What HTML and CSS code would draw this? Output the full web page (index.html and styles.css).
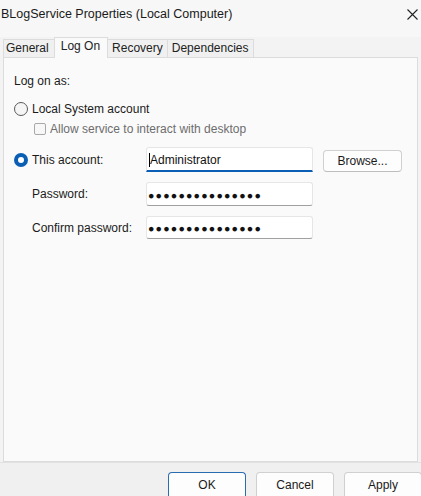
FILE: index.html
```html
<!DOCTYPE html>
<html>
<head>
<meta charset="utf-8">
<link rel="stylesheet" href="styles.css">
</head>
<body>
<div class="window">
  <div class="titlebar">
    <span class="title">BLogService Properties (Local Computer)</span>
    <svg class="close" width="11" height="11" viewBox="0 0 11 11"><path d="M0.5 0.5L10.5 10.5M10.5 0.5L0.5 10.5" stroke="#222" stroke-width="1.1" fill="none"/></svg>
  </div>
  <div class="tabs">
    <div class="tab">General</div>
    <div class="tab active">Log On</div>
    <div class="tab">Recovery</div>
    <div class="tab">Dependencies</div>
  </div>
  <div class="panel">
    <div class="heading">Log on as:</div>
    <div class="option">
      <span class="radio"></span>
      <span>Local System account</span>
    </div>
    <div class="check-row">
      <span class="checkbox"></span>
      <span>Allow service to interact with desktop</span>
    </div>
    <div class="form">
      <div class="label first"><span class="radio on"></span><span>This account:</span></div>
      <div class="input focus"><span class="caret"></span>Administrator</div>
      <button class="btn browse">Browse...</button>
      <div class="label">Password:</div>
      <div class="input pw">●●●●●●●●●●●●●●●</div>
      <div></div>
      <div class="label">Confirm password:</div>
      <div class="input pw">●●●●●●●●●●●●●●●</div>
      <div></div>
    </div>
  </div>
  <div class="footer">
    <button class="btn primary">OK</button>
    <button class="btn">Cancel</button>
    <button class="btn">Apply</button>
  </div>
</div>
</body>
</html>
```
FILE: styles.css
```css
* { box-sizing: border-box; }
html, body { margin: 0; padding: 0; }
body {
  font-family: "Liberation Sans", Arial, sans-serif;
  font-size: 12px;
  color: #000;
  background: #f0f0f0;
  width: 421px;
  height: 496px;
  overflow: hidden;
}
.window {
  width: 421px;
  height: 496px;
  display: flex;
  flex-direction: column;
  background: #f3f3f3;
}
.titlebar {
  height: 37px;
  display: flex;
  justify-content: space-between;
  align-items: flex-start;
  padding: 7px 3px 0 1px;
  background: #f7f7f7;
  font-size: 12.5px;
  color: #1a1a1a;
}
.title { line-height: 14px; }
.close { margin-top: 2px; }
.tabs {
  height: 20px;
  display: flex;
  align-items: flex-end;
  padding-left: 3px;
}
.tab {
  height: 18px;
  line-height: 17px;
  padding: 0 4px 0 4px;
  border: 1px solid #dcdcdc;
  border-bottom: none;
  background: #f0f0f0;
  color: #222;
  margin-right: -1px;
}
.tab:first-child { padding: 0 5px 0 2px; }
.tab.active {
  height: 21px;
  line-height: 17px;
  padding: 0 7px 0 6px;
  background: #fafafa;
  position: relative;
  z-index: 1;
  margin-bottom: -1px;
}
.panel {
  margin: 0 3px 0 3px;
  height: 405px;
  background: #fafafa;
  border: 1px solid #dcdcdc;
  padding: 15px 0 0 10px;
}
.heading { line-height: 16px; color: #1a1a1a; }
.option {
  margin-top: 12px;
  display: flex;
  align-items: center;
  line-height: 16px;
  gap: 4px;
  color: #1a1a1a;
}
.radio {
  width: 14px;
  height: 14px;
  border-radius: 50%;
  border: 1px solid #5a5a5a;
  background: #f5f5f5;
  display: inline-block;
  flex: none;
}
.radio.on {
  border: 4px solid #0a5fb4;
  background: #fff;
}
.check-row {
  margin-top: 4px;
  margin-left: 20px;
  display: flex;
  align-items: center;
  gap: 4px;
  line-height: 16px;
  color: #6d6d6d;
}
.checkbox {
  width: 12px;
  height: 12px;
  border: 1px solid #a8a8a8;
  border-radius: 2px;
  background: #f7f7f7;
  flex: none;
}
.form {
  margin-top: 10px;
  display: grid;
  grid-template-columns: 132px 167px auto;
  grid-template-rows: 25px 24px 23px;
  row-gap: 10px;
  align-items: center;
}
.label {
  padding-left: 18px;
  color: #1a1a1a;
}
.label.first {
  padding-left: 0;
  display: flex;
  align-items: center;
  gap: 4px;
}
.input {
  height: 100%;
  background: #fff;
  border: 1px solid #e6e6e6;
  border-bottom: 1px solid #a0a0a0;
  border-radius: 3px;
  padding-left: 2px;
  display: flex;
  align-items: center;
  font-size: 12px;
  color: #111;
}
.input.focus {
  border-bottom: 2px solid #0a5fb4;
  border-radius: 3px 3px 0 0;
  padding-top: 1px;
}
.caret {
  width: 1px;
  height: 14px;
  background: #000;
}
.input.pw {
  font-size: 10.6px;
  letter-spacing: 1.2px;
  padding-left: 1px;
  padding-top: 1px;
}
.btn {
  font-family: "Liberation Sans", Arial, sans-serif;
  font-size: 12px;
  color: #1a1a1a;
  background: #fdfdfd;
  border: 1px solid #d0d0d0;
  border-bottom-color: #bdbdbd;
  border-radius: 4px;
  height: 23px;
  padding: 0;
}
.browse {
  width: 79px;
  margin-left: 10px;
  height: 22px;
  margin-top: 3px;
}
.footer {
  flex: 1;
  border-top: 1px solid #e2e2e2;
  background: #f0f0f0;
  display: flex;
  align-items: flex-end;
  gap: 10px;
  padding-left: 168px;
}
.footer .btn {
  width: 78px;
  flex: none;
  height: 24px;
  border-radius: 4px 4px 0 0;
  border-bottom: none;
}
.footer .primary {
  border: 1px solid #2a6cb0;
  border-bottom: none;
}
```
